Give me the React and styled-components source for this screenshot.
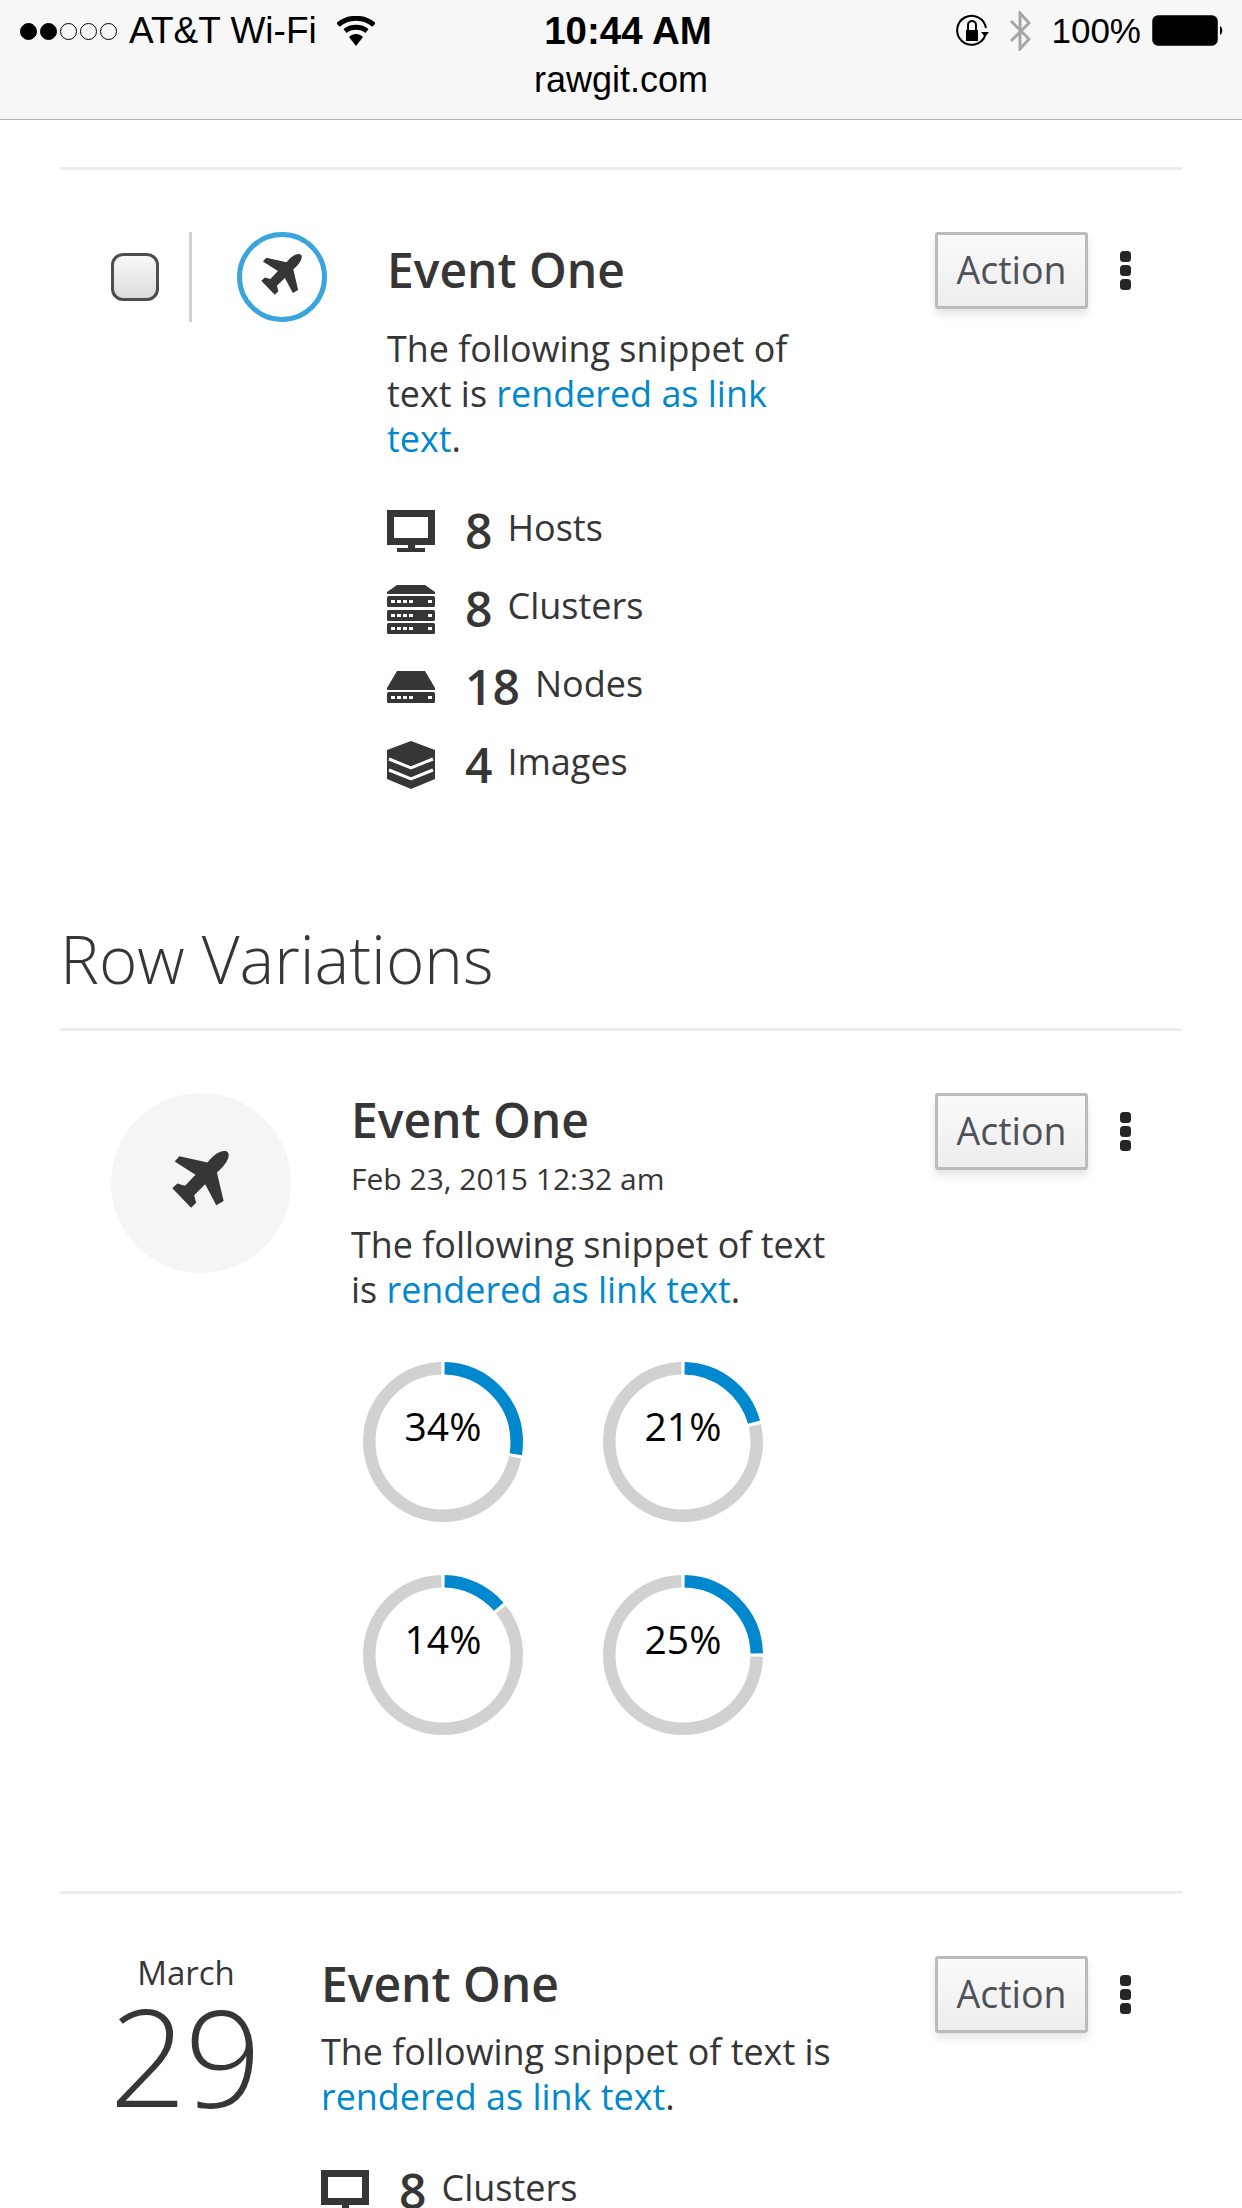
import React from "react";
import styled, { createGlobalStyle } from "styled-components";

const GlobalStyle = createGlobalStyle`
  html, body {
    margin: 0;
    padding: 0;
    background: #fff;
  }
  body {
    width: 1242px;
    height: 2208px;
    overflow: hidden;
    font-family: "Open Sans", "Liberation Sans", sans-serif;
    color: #363636;
  }
`;

const Chrome = styled.header`
  height: 119px;
  background: #f7f7f7;
  border-bottom: 1px solid #b2b2b2;
  font-family: "Liberation Sans", Arial, sans-serif;
  color: #000;
`;

const StatusBar = styled.div`
  position: relative;
  display: flex;
  align-items: center;
  justify-content: space-between;
  height: 62px;
  padding: 0 18px 0 20px;
`;

const StatusSide = styled.div`
  display: flex;
  align-items: center;
`;

const Signal = styled.span`
  width: 17px;
  height: 17px;
  margin-right: 3px;
  border-radius: 50%;
  box-sizing: border-box;
  border: 1px solid #000;
  background: ${(props) => (props.$on ? "#000" : "transparent")};
`;

const Carrier = styled.span`
  margin-left: 9px;
  font-size: 37px;
`;

const Charge = styled.span`
  margin-left: 20px;
  font-size: 35px;
`;

const StatusGlyph = styled.svg`
  margin-left: ${(props) => props.$gap || 0}px;
`;

const Clock = styled.div`
  position: absolute;
  left: 0;
  right: 0;
  top: 11px;
  padding-left: 14px;
  text-align: center;
  font-weight: 700;
  font-size: 38.5px;
  line-height: 40px;
`;

const Address = styled.div`
  text-align: center;
  font-size: 36px;
  line-height: 40px;
  margin-top: -2px;
`;

const Page = styled.main`
  padding: 47px 60px 0;
`;

const Rule = styled.hr`
  margin: 0;
  border: 0;
  height: 3px;
  background: #ededed;
`;

const Row = styled.section`
  display: flex;
  align-items: flex-start;
  padding: 62px 51px 0;
  height: ${(props) => props.$height}px;
  box-sizing: border-box;
`;

const Select = styled.div`
  display: flex;
  align-items: center;
  width: 81px;
  height: 90px;
  flex: none;
  border-right: 3px solid #d1d1d1;
  box-sizing: border-box;
`;

const Checkbox = styled.span`
  width: 48px;
  height: 48px;
  box-sizing: border-box;
  border: 3px solid #4d4d4d;
  border-radius: 12px;
  background: linear-gradient(#f8f8f8, #dcdcdc);
`;

const RingIcon = styled.div`
  display: flex;
  align-items: center;
  justify-content: center;
  width: 90px;
  height: 90px;
  flex: none;
  margin: 0 60px 0 45px;
  padding: 0 2px 5px 0;
  box-sizing: border-box;
  border: 5px solid #39a5dc;
  border-radius: 50%;
`;

const DiscIcon = styled.div`
  display: flex;
  align-items: center;
  justify-content: center;
  width: 180px;
  height: 180px;
  flex: none;
  margin-right: 60px;
  padding: 0 2px 8px 0;
  box-sizing: border-box;
  border-radius: 50%;
  background: #f5f5f5;
`;

const DateBlock = styled.div`
  width: 150px;
  flex: none;
  margin-right: 60px;
  text-align: center;
  color: #363636;
`;

const Month = styled.div`
  font-size: 33px;
  line-height: 40px;
  margin-top: -3px;
`;

const Day = styled.div`
  font-size: 135px;
  font-weight: 300;
  line-height: 120px;
  margin-top: 2px;
  margin-left: -3px;
  letter-spacing: -2px;
`;

const Body = styled.div`
  width: ${(props) => props.$width}px;
  flex: none;
`;

const Title = styled.h3`
  margin: ${(props) => props.$top}px 0 0;
  font-size: 48px;
  font-weight: 600;
  line-height: 60px;
`;

const DateLine = styled.div`
  font-size: 30px;
  line-height: 40px;
  margin-top: 9px;
`;

const Snippet = styled.p`
  margin: ${(props) => props.$top}px 0 0;
  font-size: 35.9px;
  line-height: 45px;
`;

const Link = styled.a`
  color: #0088ce;
`;

const Actions = styled.div`
  display: flex;
  align-items: center;
  margin-left: auto;
`;

const ActionButton = styled.button`
  width: 153px;
  height: 77px;
  padding: 0 0 2px;
  box-sizing: border-box;
  border: 3px solid #bbb;
  border-radius: 3px;
  background: linear-gradient(#fafafa, #ededed);
  box-shadow: 0 6px 9px rgba(3, 3, 3, 0.1);
  font-family: inherit;
  font-size: 37.5px;
  font-weight: 500;
  color: #4d5258;
`;

const Kebab = styled.span`
  display: flex;
  flex-direction: column;
  gap: 3px;
  margin-left: 32px;

  i {
    display: block;
    width: 11px;
    height: 11px;
    border-radius: 3.5px;
    background: #252525;
  }
`;

const Stats = styled.ul`
  list-style: none;
  margin: ${(props) => props.$top}px 0 0;
  padding: 0;
`;

const Stat = styled.li`
  display: flex;
  align-items: center;
  height: 78px;
`;

const StatIcon = styled.span`
  display: flex;
  justify-content: center;
  width: 48px;
  margin-right: 30px;
  flex: none;
`;

const StatNumber = styled.strong`
  font-size: 48px;
  font-weight: 600;
  line-height: 60px;
  margin-right: 15px;
`;

const StatLabel = styled.span`
  font-size: 36px;
  line-height: 45px;
  margin-top: -7px;
`;

const Heading = styled.h2`
  margin: 0;
  padding: 0 0 24px;
  font-size: 65.5px;
  font-weight: 300;
  line-height: 90px;
  color: #363636;
`;

const DonutGrid = styled.div`
  display: grid;
  grid-template-columns: 160px 160px;
  column-gap: 80px;
  row-gap: 53px;
  margin: 50px 0 0 12px;
`;

const Plane = ({ size }) => (
  <svg width={size} height={size} viewBox="247 241 168 170" fill="#363636">
    <path d="M352 275C365 258 385 241 402 241C412 241 416 247 415 256C413 272 396 292 380 305L400 390L378 403L345 340L312 373L318 395L303 410L247 352L262 338L285 345L316 312L254 272L268 257Z" />
  </svg>
);

const Monitor = () => (
  <svg width="48" height="42" viewBox="0 0 48 42" fill="#363636">
    <path fillRule="evenodd" d="M0 0H48V35H0ZM7 7V28H41V7Z" />
    <path d="M21 35H28V38H38V42H10V38H21Z" />
  </svg>
);

const Slab = ({ y }) => (
  <>
    <rect x="0" y={y} width="48" height="11" rx="1.5" fill="#363636" />
    <path
      d={`M4 ${y + 4}h4v3h-4zM10 ${y + 4}h4v3h-4zM16 ${y + 4}h4v3h-4zM22 ${y + 4}h4v3h-4zM41 ${y + 4}h4v3h-4z`}
      fill="#fff"
    />
  </>
);

const Clusters = () => (
  <svg width="48" height="49" viewBox="0 0 48 49">
    <path d="M10 0H38L48 7V9H0V7Z" fill="#363636" />
    <Slab y={11} />
    <Slab y={25} />
    <Slab y={38} />
  </svg>
);

const Nodes = () => (
  <svg width="48" height="32" viewBox="0 0 48 32">
    <path d="M10 0H38L48 17V19H0V17Z" fill="#363636" />
    <Slab y={21} />
  </svg>
);

const Images = () => (
  <svg width="48" height="48" viewBox="0 0 48 48">
    <path d="M24 0L48 9V38L24 48L0 38V9Z" fill="#363636" />
    <path d="M2 18L24 27L46 18M2 29L24 38L46 29" fill="none" stroke="#fff" strokeWidth="3" />
  </svg>
);

// the arc in the picture is not always the printed value (34% draws as 28)
const Donut = ({ value, arc = value }) => (
  <svg width="160" height="160" viewBox="0 0 160 160">
    <g transform="rotate(-90 80 80)" fill="none" strokeWidth="12.5">
      <circle
        cx="80"
        cy="80"
        r="73.75"
        pathLength="100"
        stroke="#d1d1d1"
        strokeDasharray={`${100 - arc - 0.7} 100`}
        strokeDashoffset={-arc - 0.35}
      />
      <circle
        cx="80"
        cy="80"
        r="73.75"
        pathLength="100"
        stroke="#0088ce"
        strokeDasharray={`${arc - 0.7} 100`}
        strokeDashoffset={-0.35}
      />
    </g>
    <text x="80" y="79" textAnchor="middle" fontSize="39" fontFamily="Open Sans" fill="#000">
      {value}%
    </text>
  </svg>
);

const RowActions = () => (
  <Actions>
    <ActionButton>Action</ActionButton>
    <Kebab>
      <i />
      <i />
      <i />
    </Kebab>
  </Actions>
);

const StatItem = ({ icon, count, label }) => (
  <Stat>
    <StatIcon>{icon}</StatIcon>
    <StatNumber>{count}</StatNumber>
    <StatLabel>{label}</StatLabel>
  </Stat>
);

const App = () => (
  <>
    <GlobalStyle />
    <Chrome>
      <StatusBar>
        <StatusSide>
          <Signal $on />
          <Signal $on />
          <Signal />
          <Signal />
          <Signal />
          <Carrier>AT&amp;T Wi-Fi</Carrier>
          <StatusGlyph $gap={20} width="38" height="30" viewBox="0 0 38 30">
            <path d="M1 9C11 0 27 0 37 9" fill="none" stroke="#000" strokeWidth="5" />
            <path d="M8 15C14 10 24 10 30 15" fill="none" stroke="#000" strokeWidth="5" />
            <path d="M12 21C16 17 22 17 26 21L19 30Z" fill="#000" />
          </StatusGlyph>
        </StatusSide>
        <Clock>10:44 AM</Clock>
        <StatusSide>
          <StatusGlyph width="34" height="36" viewBox="0 0 34 36">
            <path d="M30 23A14.5 14.5 0 1 1 31 15" fill="none" stroke="#000" strokeWidth="2" />
            <path d="M26 19H34L30 24Z" fill="#000" />
            <rect x="11" y="17" width="12" height="11" fill="#000" />
            <path d="M13 17V12A4 4 0 0 1 21 12V17" fill="none" stroke="#000" strokeWidth="2" />
          </StatusGlyph>
          <StatusGlyph $gap={20} width="22" height="40" viewBox="0 0 22 40">
            <path d="M2 10L20 28L11 38V2L20 12L2 30" fill="none" stroke="#a6a6a6" strokeWidth="3" />
          </StatusGlyph>
          <Charge>100%</Charge>
          <StatusGlyph $gap={11} width="72" height="32" viewBox="0 0 72 32">
            <rect x="1" y="1" width="64" height="29" rx="5" fill="#000" stroke="#000" strokeWidth="1.5" />
            <path d="M68 11C71 12 71 19 68 20Z" fill="#000" />
          </StatusGlyph>
        </StatusSide>
      </StatusBar>
      <Address>rawgit.com</Address>
    </Chrome>

    <Page>
      <Rule />
      <Row $height={744}>
        <Select>
          <Checkbox />
        </Select>
        <RingIcon>
          <Plane size={41} />
        </RingIcon>
        <Body $width={430}>
          <Title $top={8}>Event One</Title>
          <Snippet $top={26}>
            The following snippet of text is <Link>rendered as link text</Link>.
          </Snippet>
          <Stats $top={31}>
            <StatItem icon={<Monitor />} count="8" label="Hosts" />
            <StatItem icon={<Clusters />} count="8" label="Clusters" />
            <StatItem icon={<Nodes />} count="18" label="Nodes" />
            <StatItem icon={<Images />} count="4" label="Images" />
          </Stats>
        </Body>
        <RowActions />
      </Row>

      <Heading>Row Variations</Heading>
      <Rule />
      <Row $height={860}>
        <DiscIcon>
          <Plane size={57} />
        </DiscIcon>
        <Body $width={490}>
          <Title $top={-3}>Event One</Title>
          <DateLine>Feb 23, 2015 12:32 am</DateLine>
          <Snippet $top={23}>
            The following snippet of text is <Link>rendered as link text</Link>.
          </Snippet>
          <DonutGrid>
            <Donut value={34} arc={28} />
            <Donut value={21} />
            <Donut value={14} />
            <Donut value={25} />
          </DonutGrid>
        </Body>
        <RowActions />
      </Row>

      <Rule />
      <Row $height={316}>
        <DateBlock>
          <Month>March</Month>
          <Day>29</Day>
        </DateBlock>
        <Body $width={530}>
          <Title $top={-2}>Event One</Title>
          <Snippet $top={15}>
            The following snippet of text is <Link>rendered as link text</Link>.
          </Snippet>
          <Stats $top={33}>
            <StatItem icon={<Monitor />} count="8" label="Clusters" />
          </Stats>
        </Body>
        <RowActions />
      </Row>
    </Page>
  </>
);

export default App;
